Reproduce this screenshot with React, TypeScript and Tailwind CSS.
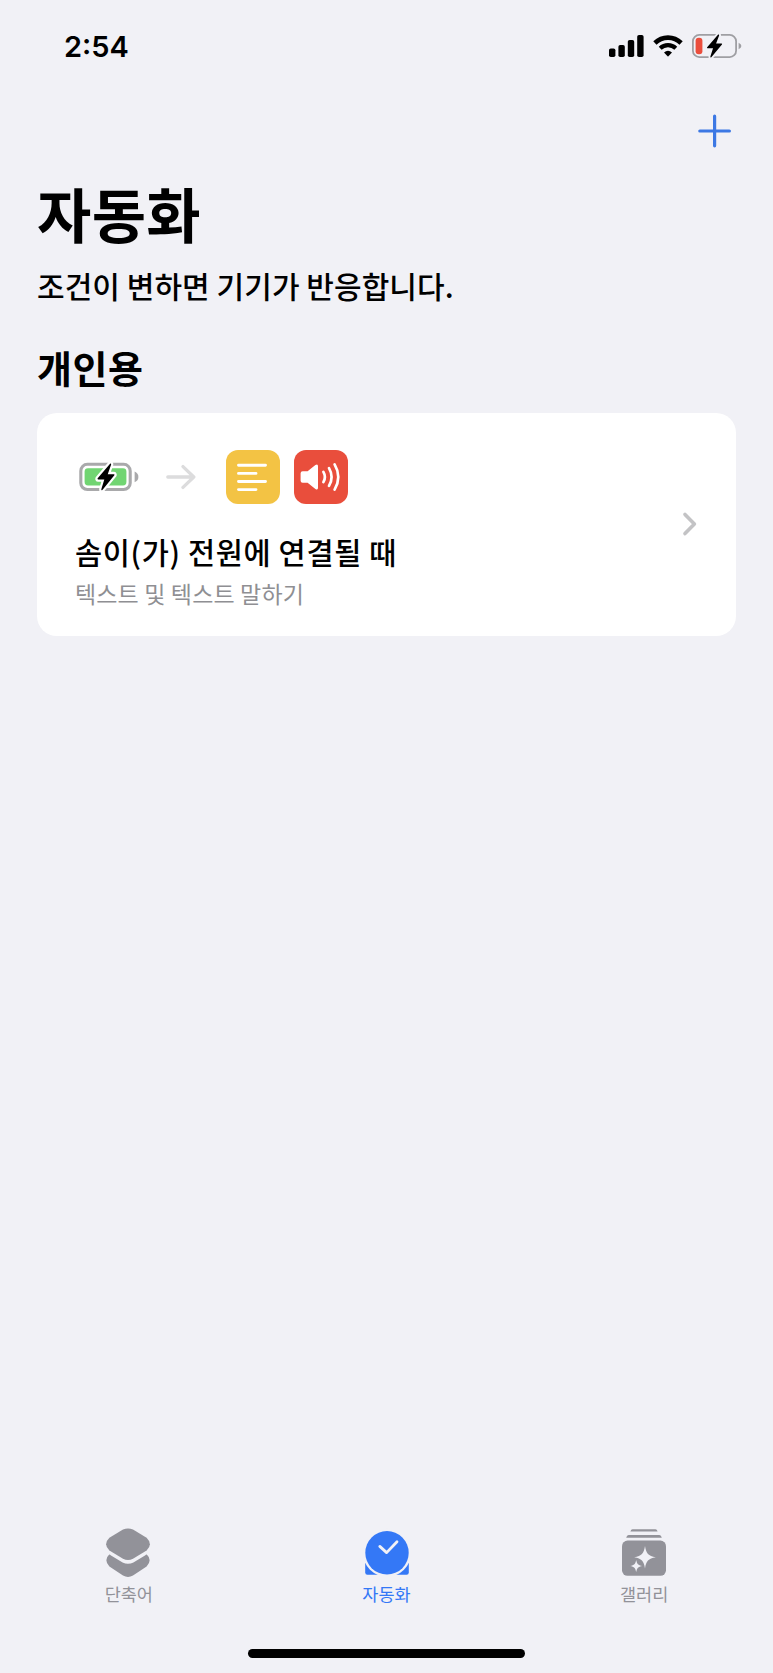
import type { ReactNode } from 'react';

const BOLT = 'M12.6 0.6 L1 13.2 Q0.4 14.2 1.5 14.2 H7.2 L4.4 22.6 Q4.3 24 5.4 23.2 L16.6 10.6 Q17.2 9.6 16 9.6 H10.4 L13.6 1.4 Q13.6 0 12.6 0.6 Z';

function SignalIcon() {
    return (
        <svg width="35" height="22" viewBox="0 0 35 22">
            <rect x="0" y="13.5" width="6.4" height="8.5" rx="1.8" />
            <rect x="9.4" y="10" width="6.4" height="12" rx="1.8" />
            <rect x="18.8" y="5" width="6.4" height="17" rx="1.8" />
            <rect x="28.2" y="0" width="6.4" height="22" rx="1.8" />
        </svg>
    );
}

function WifiIcon() {
    return (
        <svg width="30" height="22" viewBox="0 0 30 22">
            <path d="M1.9 8 A18.6 18.6 0 0 1 28.1 8" fill="none" stroke="#000" strokeWidth="4.6" />
            <path d="M7.2 13.3 A11.2 11.2 0 0 1 22.8 13.3" fill="none" stroke="#000" strokeWidth="4.1" />
            <path d="M11 17.4 Q15 14 19 17.4 L15.4 21.3 Q15 21.7 14.6 21.3 Z" />
        </svg>
    );
}

function StatusBattery() {
    return (
        <svg width="50" height="26" viewBox="0 0 50 26">
            <rect x="0.9" y="1.9" width="43.2" height="22.2" rx="6.4" fill="none" stroke="#9f9fa3" strokeWidth="1.8" />
            <path d="M46.6 9.8 Q49.4 11 49.4 13 T46.6 16.2 Z" fill="#9f9fa3" />
            <rect x="3.6" y="4.8" width="6.8" height="16.4" rx="3" fill="#eb4e3d" />
            <g transform="translate(14.2 1) scale(.95 1)">
                <path d={BOLT} fill="#f1f1f6" stroke="#f1f1f6" strokeWidth="4" />
                <path d={BOLT} />
            </g>
        </svg>
    );
}

function StatusBar() {
    return (
        <div className="flex h-[93px] items-start justify-between pl-16 pr-[31px] pt-[33px]">
            <span className="font-['Inter',sans-serif] text-[29px] font-semibold leading-[28px]">2:54</span>
            <div className="flex items-center gap-[9px]">
                <SignalIcon />
                <WifiIcon />
                <StatusBattery />
            </div>
        </div>
    );
}

function ChargingBattery() {
    return (
        <svg width="60" height="30" viewBox="0 0 60 30">
            <rect x="1.8" y="2.3" width="49.4" height="25.2" rx="6.6" fill="none" stroke="#a9a9ab" strokeWidth="3.1" />
            <path d="M55.6 9.6 Q59.4 11.2 59.4 14.9 T55.6 20.2 Z" fill="#a9a9ab" />
            <rect x="5.6" y="6.3" width="41.8" height="17.2" rx="3.4" fill="#71d572" />
            <g transform="translate(17.6 1) scale(1.07 1.16)">
                <path d={BOLT} fill="#fff" stroke="#fff" strokeWidth="4" strokeLinejoin="round" />
                <path d={BOLT} />
            </g>
        </svg>
    );
}

function ArrowIcon() {
    return (
        <svg width="30" height="26" viewBox="0 0 30 26" fill="none" stroke="#dcdcdd" strokeWidth="3.3" strokeLinecap="round" strokeLinejoin="round">
            <path d="M1.8 13 H27.5 M17 2.6 L27.8 13 L17 23.4" />
        </svg>
    );
}

function TextActionIcon() {
    return (
        <div className="size-[54px] rounded-xl bg-[#f3c344]">
            <svg width="54" height="54" viewBox="0 0 54 54" stroke="#fff" strokeWidth="2.9" strokeLinecap="round">
                <path d="M12.5 15.3 H39.5 M12.5 23.4 H30 M12.5 31.5 H39.5 M12.5 39.6 H30" />
            </svg>
        </div>
    );
}

function SpeakActionIcon() {
    return (
        <div className="size-[54px] rounded-xl bg-[#e94e3c]">
            <svg width="54" height="54" viewBox="0 0 54 54">
                <path d="M8.6 21.2 H13.6 L21.4 15 Q24 13.4 24 16.2 V37.8 Q24 40.6 21.4 39 L13.6 32.8 H8.6 Q6.6 32.8 6.6 30.8 V23.2 Q6.6 21.2 8.6 21.2 Z" fill="#fff" />
                <path d="M29.4 21.8 Q32.4 27 29.4 32.2 M35 18.1 Q40.2 27 35 35.9 M40.6 14.4 Q48 27 40.6 39.6" fill="none" stroke="#fff" strokeWidth="2.7" strokeLinecap="round" />
            </svg>
        </div>
    );
}

function AutomationCard() {
    return (
        <div className="flex h-[223px] items-center justify-between rounded-[20px] bg-white pl-[37px] pr-[38px]">
            <div className="h-full pt-[37px]">
                <div className="flex items-center pl-[5px]">
                    <ChargingBattery />
                    <div className="ml-[27px] mr-[30px]">
                        <ArrowIcon />
                    </div>
                    <TextActionIcon />
                    <div className="ml-3.5">
                        <SpeakActionIcon />
                    </div>
                </div>
                <h3 className="mt-[25px] whitespace-nowrap pl-px text-[29.5px] font-medium leading-[44px] tracking-[0.65px]">솜이(가) 전원에 연결될 때</h3>
                <p className="mt-0.5 whitespace-nowrap pl-px text-[23px] font-normal leading-[36px] tracking-[0.15px] text-[#8f8f93]">텍스트 및 텍스트 말하기</p>
            </div>
            <svg className="-mt-px" width="16" height="26" viewBox="0 0 16 26" fill="none" stroke="#c3c3c5" strokeWidth="3.6" strokeLinecap="round" strokeLinejoin="round">
                <path d="M3 3.4 L12.4 13 L3 22.6" />
            </svg>
        </div>
    );
}

function ShortcutsIcon() {
    return (
        <svg width="46" height="50" viewBox="0 0 46 50" fill="#929299">
            <path d="M17 1.6 Q22 -0.8 27 1.6 L40.6 9.8 Q47.2 16.2 40.6 22.4 L27 30.8 Q22 33.2 17 30.8 L3.4 22.4 Q-3.2 16.2 3.4 9.8 Z" />
            <path d="M3.2 26.6 Q4 26.6 5 27.4 L16.6 34.4 Q22 37 27.4 34.4 L39 27.4 Q40 26.6 40.8 26.6 Q46.6 32 40.6 38.4 L27 47.6 Q22 50.4 17 47.6 L3.4 38.4 Q-2.6 32 3.2 26.6 Z" />
        </svg>
    );
}

function AutomationIcon() {
    return (
        <svg width="44" height="50" viewBox="0 0 44 50">
            <path d="M0.2 33 H43.8 V44.6 Q43.8 46.8 41.6 46.8 H2.4 Q0.2 46.8 0.2 44.6 Z" fill="#3478f6" />
            <circle cx="22" cy="24.8" r="24" fill="#f1f1f6" />
            <circle cx="22" cy="24.8" r="21.7" fill="#3478f6" />
            <path d="M14.8 18.4 L21.6 24.6 L32 13.8" fill="none" stroke="#f1f1f6" strokeWidth="2.8" strokeLinecap="round" strokeLinejoin="round" />
        </svg>
    );
}

function GalleryIcon() {
    return (
        <svg width="44" height="50" viewBox="0 0 44 50">
            <path d="M10.6 1.2 H33.4 Q35 1.2 35.6 3.6 H8.4 Q9 1.2 10.6 1.2 Z M6.6 7 H37.4 Q39.2 7 39.8 9.8 H4.2 Q4.8 7 6.6 7 Z" fill="#929299" />
            <rect x="0" y="12.6" width="44" height="35.2" rx="5.6" fill="#929299" />
            <path d="M23 18 C24.2 25.6 26.2 27.8 33.8 29.2 C26.2 30.6 24.2 32.8 23 40.4 C21.8 32.8 19.8 30.6 12.2 29.2 C19.8 27.8 21.8 25.6 23 18 Z M14.2 32 C15 36 16.2 37.2 20.2 38 C16.2 38.8 15 40 14.2 44 C13.4 40 12.2 38.8 8.2 38 C12.2 37.2 13.4 36 14.2 32 Z" fill="#f1f1f6" />
        </svg>
    );
}

interface TabProps {
    icon: ReactNode;
    label: string;
    active?: boolean;
}

function Tab({ icon, label, active }: TabProps) {
    return (
        <button className={`flex flex-1 flex-col items-center ${active ? 'text-[#3478f6]' : 'text-[#929299]'}`}>
            {icon}
            <span className="mt-[3px] text-[17.5px] leading-[26px]">{label}</span>
        </button>
    );
}

export default function App() {
    return (
        <div className="flex h-[1673px] w-[773px] flex-col bg-[#f1f1f6] font-['Noto_Sans_CJK_KR',sans-serif] text-black">
            <StatusBar />
            <div className="flex justify-end pr-[41px] pt-[21px]">
                <svg width="34" height="34" viewBox="0 0 34 34" stroke="#3c78e4" strokeWidth="3.2" strokeLinecap="round">
                    <path d="M16.6 2.2 V31.8 M1.8 17 H31.4" />
                </svg>
            </div>

            <main className="flex-1 px-[37px] pt-[21px]">
                <h1 className="text-[59px] font-bold leading-[88px] tracking-[0.4px]">자동화</h1>
                <p className="mt-[6px] text-[30px] font-medium leading-[44px] tracking-[0.06px]">조건이 변하면 기기가 반응합니다.</p>
                <h2 className="mb-[16px] mt-[30px] text-[38px] font-bold leading-[60px] tracking-[0.5px]">개인용</h2>
                <AutomationCard />
            </main>

            <nav className="flex h-[121px]">
                <Tab icon={<ShortcutsIcon />} label="단축어" />
                <Tab icon={<AutomationIcon />} label="자동화" active />
                <Tab icon={<GalleryIcon />} label="갤러리" />
            </nav>
            <div className="mx-auto mb-[15px] h-[9.5px] w-[277px] rounded-full bg-black" />
        </div>
    );
}
